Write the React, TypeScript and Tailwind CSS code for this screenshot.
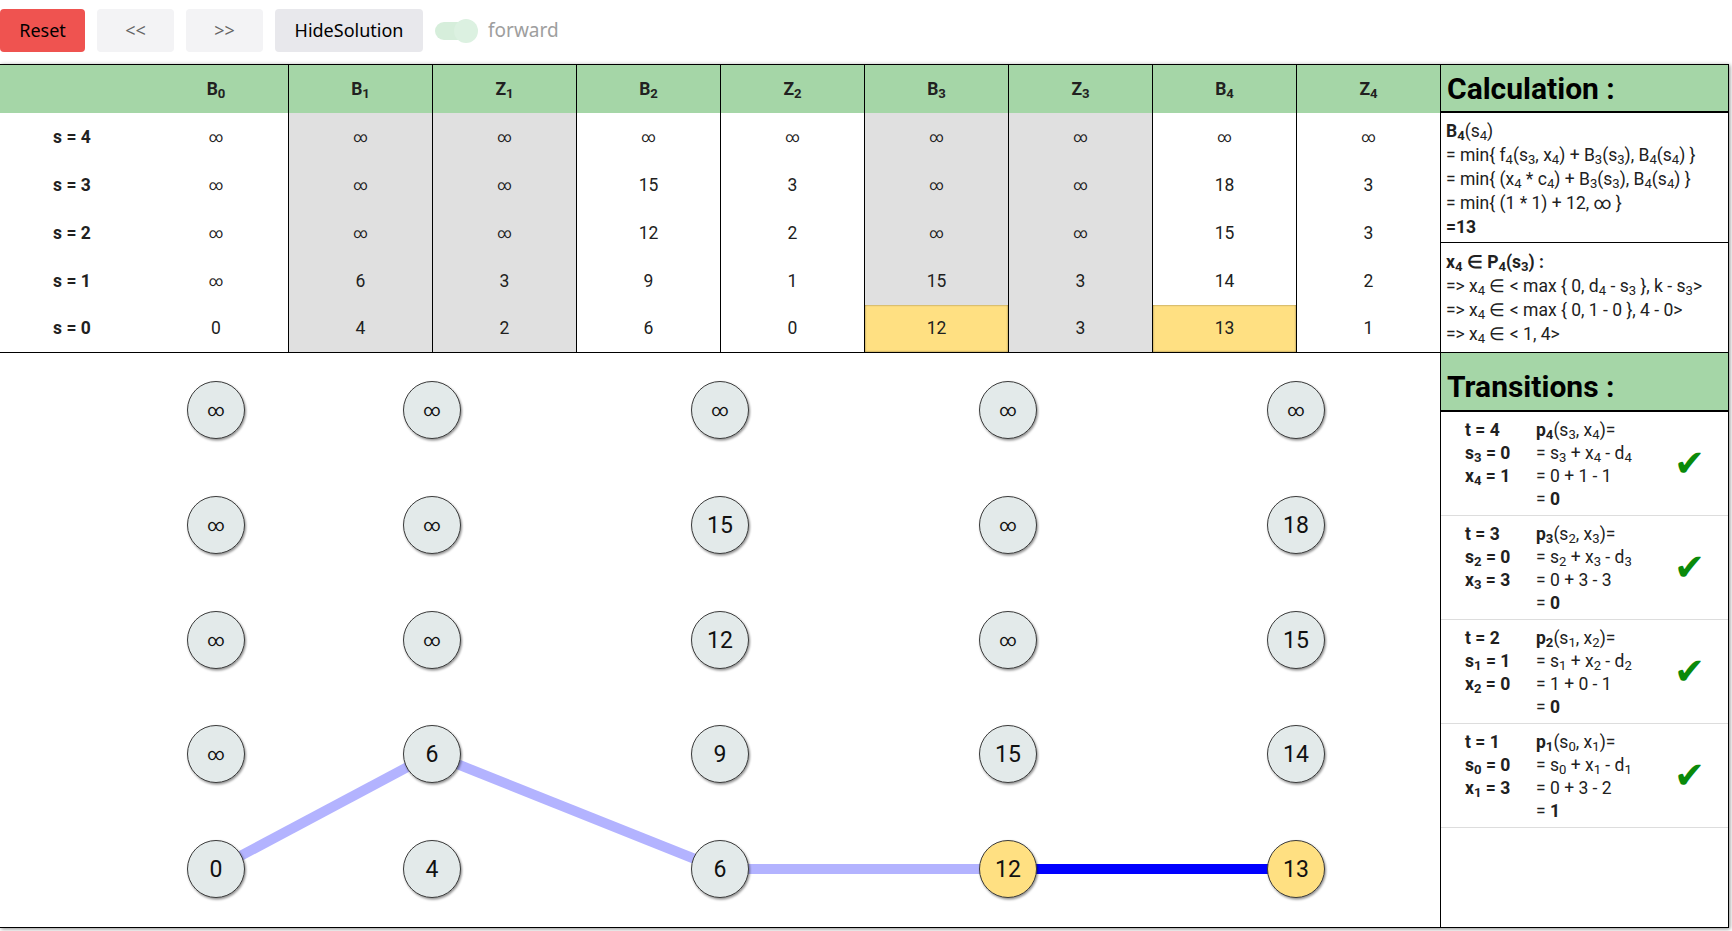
import React from "react";

const INF = "∞";
const cols = ["B0", "B1", "Z1", "B2", "Z2", "B3", "Z3", "B4", "Z4"];
const grayCols = new Set([1, 2, 5, 6]);
const rows: { s: number; v: string[] }[] = [
  { s: 4, v: [INF, INF, INF, INF, INF, INF, INF, INF, INF] },
  { s: 3, v: [INF, INF, INF, "15", "3", INF, INF, "18", "3"] },
  { s: 2, v: [INF, INF, INF, "12", "2", INF, INF, "15", "3"] },
  { s: 1, v: [INF, "6", "3", "9", "1", "15", "3", "14", "2"] },
  { s: 0, v: ["0", "4", "2", "6", "0", "12", "3", "13", "1"] },
];

const nodeCols = [
  { x: 216, v: [INF, INF, INF, INF, "0"] },
  { x: 432, v: [INF, INF, INF, "6", "4"] },
  { x: 720, v: [INF, "15", "12", "9", "6"] },
  { x: 1008, v: [INF, INF, INF, "15", "12"] },
  { x: 1296, v: [INF, "18", "15", "14", "13"] },
];
const rowY = [57, 172, 287, 401, 516];

const transitions = [
  { t: 4, sp: "3", sv: "0", x: "4", xv: "1", calc: "0 + 1 - 1", res: "0" },
  { t: 3, sp: "2", sv: "0", x: "3", xv: "3", calc: "0 + 3 - 3", res: "0" },
  { t: 2, sp: "1", sv: "1", x: "2", xv: "0", calc: "1 + 0 - 1", res: "0" },
  { t: 1, sp: "0", sv: "0", x: "1", xv: "3", calc: "0 + 3 - 2", res: "1" },
];

function Head({ name }: { name: string }) {
  return (
    <span>
      {name[0]}
      <sub>{name.slice(1)}</sub>
    </span>
  );
}

export default function App() {
  return (
    <div className="w-[1732px] h-[931px] bg-white text-[#212121] font-['Roboto',sans-serif] overflow-hidden">
      {/* Top bar */}
      <div className="flex items-center gap-3 pt-[9px] pb-[12px] h-[64px] font-['Noto_Sans',sans-serif] text-[18px]">
        <button className="w-[85px] h-[43px] rounded-[4px] bg-[#ef5350] text-black">Reset</button>
        <button className="w-[77px] h-[43px] rounded-[4px] bg-[#f3f3f5] text-[#666]">&lt;&lt;</button>
        <button className="w-[77px] h-[43px] rounded-[4px] bg-[#f3f3f5] text-[#666]">&gt;&gt;</button>
        <button className="w-[148px] h-[43px] rounded-[4px] bg-[#e8e8ec] text-black">HideSolution</button>
        <div className="flex items-center gap-[10px]">
          <div className="relative w-[43px] h-[24px] flex items-center">
            <div className="w-[38px] h-[18px] rounded-full bg-[#d6eedb]" />
            <div className="absolute right-0 top-0 w-[24px] h-[24px] rounded-full bg-[#dcf1e1]" />
          </div>
          <span className="text-[#9e9e9e] text-[19px]">forward</span>
        </div>
      </div>

      {/* Frame */}
      <div className="flex w-[1729px] h-[864px] border-y border-r border-black shadow-[1px_1px_4px_rgba(0,0,0,0.45)]">
        {/* Left */}
        <div className="w-[1440px] flex flex-col">
          <div className="grid grid-cols-[repeat(10,144px)] grid-rows-[48px_48px_48px_48px_48px_47px] border-b border-black">
            <div className="bg-[#a5d6a7]" />
            {cols.map((c, i) => (
              <div
                key={c}
                className={`bg-[#a5d6a7] flex items-center justify-center font-bold text-[17.5px] ${i > 0 ? "border-l border-black" : ""}`}
              >
                <Head name={c} />
              </div>
            ))}
            {rows.map((r) => (
              <React.Fragment key={r.s}>
                <div className="flex items-center justify-center font-bold text-[17.5px]">s = {r.s}</div>
                {r.v.map((v, i) => {
                  const yellow = r.s === 0 && (i === 5 || i === 7);
                  const bg = yellow ? "bg-[#ffe082] shadow-[inset_0_0_2px_rgba(0,0,0,0.55)]" : grayCols.has(i) ? "bg-[#e0e0e0]" : "bg-white";
                  return (
                    <div
                      key={i}
                      className={`flex items-center justify-center ${v === INF ? "text-[14px]" : "text-[17.5px]"} ${bg} ${i > 0 ? "border-l border-black" : ""}`}
                    >
                      {v}
                    </div>
                  );
                })}
              </React.Fragment>
            ))}
          </div>
          <div className="flex-1">
            <svg width="1440" height="574" viewBox="0 0 1440 574">
              <defs>
                <filter id="sh" x="-30%" y="-30%" width="160%" height="160%">
                  <feDropShadow dx="1" dy="1.5" stdDeviation="1.2" floodColor="#000" floodOpacity="0.45" />
                </filter>
              </defs>
              <line x1="216" y1="516" x2="432" y2="401" stroke="#b3b3ff" strokeWidth="10" />
              <line x1="432" y1="401" x2="720" y2="516" stroke="#b3b3ff" strokeWidth="10" />
              <line x1="720" y1="516" x2="1008" y2="516" stroke="#b3b3ff" strokeWidth="10" />
              <line x1="1008" y1="516" x2="1296" y2="516" stroke="#0000ff" strokeWidth="10" />
              {nodeCols.map((c, ci) =>
                c.v.map((v, ri) => {
                  const yellow = ri === 4 && (ci === 3 || ci === 4);
                  return (
                    <g key={`${ci}-${ri}`}>
                      <circle
                        cx={c.x}
                        cy={rowY[ri]}
                        r="28.5"
                        fill={yellow ? "#ffe082" : "#e3eaea"}
                        stroke="#3a3a3a"
                        strokeWidth="1"
                        filter="url(#sh)"
                      />
                      <text
                        x={c.x}
                        y={rowY[ri] + (v === INF ? 6 : 8)}
                        textAnchor="middle"
                        fontFamily="Roboto, sans-serif"
                        fontSize={v === INF ? 17 : 23}
                        fill="#111"
                      >
                        {v}
                      </text>
                    </g>
                  );
                })
              )}
            </svg>
          </div>
        </div>

        {/* Right panel */}
        <div className="w-[288px] border-l border-black flex flex-col">
          <div className="h-[288px] border-b border-black flex flex-col">
            <div className="h-[48px] bg-[#a5d6a7] border-b-2 border-black flex items-center pl-[6px]">
              <span className="font-bold text-[30px] text-black">Calculation :</span>
            </div>
            <div className="pl-[5px] pt-[6px] pb-[3px] leading-6 text-[17.5px] border-b border-black whitespace-nowrap">
              <div>
                <b>
                  B<sub>4</sub>
                </b>
                (s<sub>4</sub>)
              </div>
              <div>
                = min{"{"} f<sub>4</sub>(s<sub>3</sub>, x<sub>4</sub>) + B<sub>3</sub>(s<sub>3</sub>), B<sub>4</sub>(s<sub>4</sub>) {"}"}
              </div>
              <div>
                = min{"{"} (x<sub>4</sub> * c<sub>4</sub>) + B<sub>3</sub>(s<sub>3</sub>), B<sub>4</sub>(s<sub>4</sub>) {"}"}
              </div>
              <div>= min{"{"} (1 * 1) + 12, ∞ {"}"}</div>
              <div className="font-bold">=13</div>
            </div>
            <div className="pl-[5px] pt-[7px] leading-6 text-[17.5px] whitespace-nowrap">
              <div className="font-bold">
                x<sub>4</sub> ∈ P<sub>4</sub>(s<sub>3</sub>) :
              </div>
              <div>
                =&gt; x<sub>4</sub> ∈ &lt; max {"{"} 0, d<sub>4</sub> - s<sub>3</sub> {"}"}, k - s<sub>3</sub>&gt;
              </div>
              <div>
                =&gt; x<sub>4</sub> ∈ &lt; max {"{"} 0, 1 - 0 {"}"}, 4 - 0&gt;
              </div>
              <div>
                =&gt; x<sub>4</sub> ∈ &lt; 1, 4&gt;
              </div>
            </div>
          </div>
          <div className="flex-1 flex flex-col">
            <div className="h-[59px] bg-[#a5d6a7] border-b-2 border-black flex items-center pl-[6px] pt-[10px]">
              <span className="font-bold text-[30px] text-black">Transitions :</span>
            </div>
            {transitions.map((tr) => (
              <div key={tr.t} className="h-[104px] border-b border-[#dddddd] flex items-center pl-[24px] pr-[23px] text-[17.5px] leading-[23px] whitespace-nowrap">
                <div className="w-[71px] font-bold self-start pt-[7px]">
                  <div>t = {tr.t}</div>
                  <div>
                    s<sub>{tr.sp}</sub> = {tr.sv}
                  </div>
                  <div>
                    x<sub>{tr.x}</sub> = {tr.xv}
                  </div>
                </div>
                <div className="flex-1 self-start pt-[7px]">
                  <div>
                    <b>
                      p<sub>{tr.t}</sub>
                    </b>
                    (s<sub>{tr.sp}</sub>, x<sub>{tr.x}</sub>)=
                  </div>
                  <div>
                    = s<sub>{tr.sp}</sub> + x<sub>{tr.x}</sub> - d<sub>{tr.t}</sub>
                  </div>
                  <div>= {tr.calc}</div>
                  <div>
                    = <b>{tr.res}</b>
                  </div>
                </div>
                <span className="text-[#0a8a0a] text-[37px] font-['DejaVu_Sans',sans-serif] leading-none">✔</span>
              </div>
            ))}
          </div>
        </div>
      </div>
    </div>
  );
}
